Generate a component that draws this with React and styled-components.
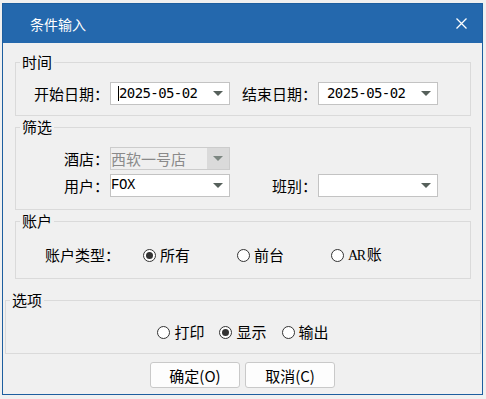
import React from "react";
import styled, { createGlobalStyle } from "styled-components";

const GlobalStyle = createGlobalStyle`
  html, body {
    margin: 0;
    padding: 0;
    background: #f0f0f0;
  }
  body {
    font-family: "Noto Sans CJK SC", "Noto Sans", sans-serif;
    color: #000;
  }
`;

const Window = styled.div`
  width: 479px;
  margin: 3px 0 0 2px;
  border: 1px solid #1d5e9f;
  background: #f0f0f0;
`;

const TitleBar = styled.div`
  height: 39px;
  display: flex;
  align-items: center;
  justify-content: space-between;
  padding: 0 15px 0 27px;
  background: #2468ad;
  color: #fff;
  font-size: 14px;
`;

const Body = styled.div`
  padding: 11px 0 6px;
`;

const Groups = styled.div`
  padding: 0 11px 0 12px;
`;

const Group = styled.fieldset`
  margin: ${p => p.$mt || 0}px ${p => p.$mr || 0}px 0 ${p => p.$ml || 0}px;
  padding: ${p => p.$pt}px 0 ${p => p.$pb}px;
  border: 1px solid #dadada;
  min-width: 0;
`;

const Legend = styled.legend`
  margin-left: 4px;
  padding: 0 2px;
  font-size: 15px;
  line-height: 16px;
`;

const FormGrid = styled.div`
  display: grid;
  grid-template-columns: 94px 120px 88px 120px;
  row-gap: 4px;
  align-items: center;
`;

const Label = styled.span`
  font-size: 15px;
  line-height: 23px;
  text-align: right;
  padding-right: 1px;
  white-space: nowrap;
`;

const Combo = styled.div`
  box-sizing: border-box;
  width: 120px;
  height: 23px;
  display: flex;
  align-items: center;
  padding-left: ${p => p.$pad || 0}px;
  border: 1px solid ${p => (p.$disabled ? "#cccccc" : "#c3c3c3")};
  background: ${p => (p.$disabled ? "#efefef" : "#fff")};
`;

const ComboText = styled.span`
  flex: 1;
  overflow: hidden;
  white-space: nowrap;
  font-size: ${p => p.$size || 15}px;
  letter-spacing: ${p => p.$ls || 0}px;
  font-family: ${p => p.$font || "inherit"};
  color: ${p => (p.$disabled ? "#8a8a8a" : "#000")};
  line-height: 21px;
`;

const Caret = styled.span`
  width: 1px;
  height: 15px;
  margin-left: -1px;
  background: #000;
`;

const ArrowBox = styled.span`
  width: 22px;
  height: 100%;
  display: flex;
  align-items: center;
  justify-content: center;
  background: ${p => (p.$disabled ? "#dadada" : "transparent")};

  &::after {
    content: "";
    border-left: 5px solid transparent;
    border-right: 5px solid transparent;
    border-top: 5px solid ${p => (p.$disabled ? "#7d8782" : "#56605b")};
  }
`;

const RadioRow = styled.div`
  display: flex;
  align-items: center;
  justify-content: ${p => (p.$center ? "center" : "flex-start")};
  gap: ${p => p.$gap || 0}px;
  padding-left: ${p => p.$pl || 0}px;
  height: 20px;
  font-size: 15px;
`;

const RowLabel = styled.span`
  width: 98px;
  line-height: 20px;
`;

const RadioItem = styled.label`
  display: flex;
  align-items: center;
  width: ${p => (p.$w ? `${p.$w}px` : "auto")};
  line-height: 20px;
`;

const Circle = styled.span`
  box-sizing: border-box;
  width: 13px;
  height: 13px;
  margin-right: 4px;
  border: 1px solid #333;
  border-radius: 50%;
  background: #fff;
  display: flex;
  align-items: center;
  justify-content: center;

  &::after {
    content: "";
    width: 7px;
    height: 7px;
    border-radius: 50%;
    background: ${p => (p.$checked ? "#333" : "transparent")};
  }
`;

const Latin = styled.span`
  font-family: "Liberation Serif", serif;
  font-size: 14px;
  letter-spacing: -1.4px;
  margin-right: 2px;
`;

const Buttons = styled.div`
  display: flex;
  justify-content: center;
  gap: 5px;
  margin-top: 8px;
`;

const Button = styled.button`
  box-sizing: border-box;
  width: 90px;
  height: 26px;
  padding: 0;
  border: 1px solid #c9c9c9;
  border-radius: 3px;
  background: #fdfdfd;
  font-family: inherit;
  font-size: 15px;
  color: #000;
`;

const Radio = ({ checked, w, children }) => (
  <RadioItem $w={w}>
    <Circle $checked={checked} />
    <span>{children}</span>
  </RadioItem>
);

const Select = ({ value, date, caret, disabled, mono }) => (
  <Combo $pad={date ? 8 : 0} $disabled={disabled}>
    {caret && <Caret />}
    <ComboText
      $disabled={disabled}
      $size={date || mono ? 14 : 15}
      $ls={date ? -0.6 : mono ? -0.4 : 0}
      $font={date ? '"DejaVu Sans Mono", monospace' : mono ? '"Liberation Mono", monospace' : undefined}
    >
      {value}
    </ComboText>
    <ArrowBox $disabled={disabled} />
  </Combo>
);

const CloseIcon = () => (
  <svg width="11" height="11" viewBox="0 0 11 11">
    <path d="M0.5 0.5 L10.5 10.5 M10.5 0.5 L0.5 10.5" stroke="#fff" strokeWidth="1.3" />
  </svg>
);

const App = () => {
  return (
    <>
      <GlobalStyle />
      <Window>
        <TitleBar>
          <span>条件输入</span>
          <CloseIcon />
        </TitleBar>
        <Body>
          <Groups>
            <Group $pt={12} $pb={10}>
              <Legend>时间</Legend>
              <FormGrid>
                <Label>开始日期：</Label>
                <Select value="2025-05-02" date caret />
                <Label>结束日期：</Label>
                <Select value="2025-05-02" date />
              </FormGrid>
            </Group>

            <Group $mt={3} $pt={12} $pb={12}>
              <Legend>筛选</Legend>
              <FormGrid>
                <Label>酒店：</Label>
                <Select value="西软一号店" disabled />
                <span />
                <span />
                <Label>用户：</Label>
                <Select value="FOX" mono />
                <Label>班别：</Label>
                <Select value="" />
              </FormGrid>
            </Group>

            <Group $mt={3} $pt={16} $pb={13}>
              <Legend>账户</Legend>
              <RadioRow $pl={29}>
                <RowLabel>账户类型：</RowLabel>
                <Radio w={94} checked>所有</Radio>
                <Radio w={94}>前台</Radio>
                <Radio><Latin>AR</Latin>账</Radio>
              </RadioRow>
            </Group>
          </Groups>

          <Group $mt={13} $ml={2} $mr={1} $pt={14} $pb={11}>
            <Legend>选项</Legend>
            <RadioRow $center $gap={15}>
              <Radio>打印</Radio>
              <Radio checked>显示</Radio>
              <Radio>输出</Radio>
            </RadioRow>
          </Group>

          <Buttons>
            <Button>确定(O)</Button>
            <Button>取消(C)</Button>
          </Buttons>
        </Body>
      </Window>
    </>
  );
};

export default App;
